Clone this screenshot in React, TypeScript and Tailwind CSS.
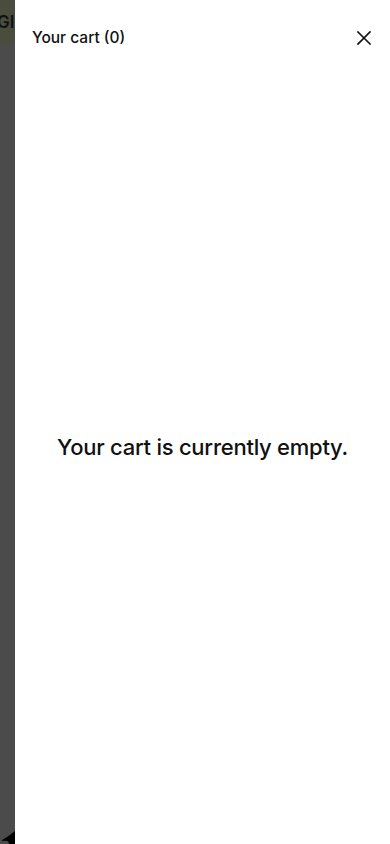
import React from 'react';

const CloseIcon: React.FC = () => (
  <svg width="16" height="16" viewBox="0 0 16 16" fill="none" stroke="#111" strokeWidth="1.6" strokeLinecap="square">
    <path d="M2 2L14 14M14 2L2 14" />
  </svg>
);

const Backdrop: React.FC = () => (
  <div className="w-[15px] shrink-0 flex flex-col bg-[#4b4b4b] overflow-hidden relative">
    <div className="h-[45px] bg-[#4a4c3e] flex items-center overflow-hidden">
      <span className="text-[17px] font-semibold text-[#111] -ml-[3px] leading-none">GI</span>
    </div>
    <div className="flex-1" />
    <svg className="absolute bottom-0 left-0" width="15" height="16" viewBox="0 0 15 16">
      <path d="M2 12 C6 10 10 7 15 3 L15 16 L9 16 C9 13 7 12 2 13 Z" fill="#000" />
    </svg>
  </div>
);

export default function App() {
  return (
    <div className="w-[390px] h-[844px] flex overflow-hidden bg-white" style={{ fontFamily: 'Inter, "Noto Sans", sans-serif' }}>
      <Backdrop />
      <div className="flex-1 flex flex-col bg-white">
        <div className="h-[75px] flex items-center justify-between pl-[17px] pr-[18px]">
          <h2 className="text-[15.5px] font-medium text-[#111] tracking-[0px]">Your cart (0)</h2>
          <button className="p-0 flex items-center justify-center"><CloseIcon /></button>
        </div>
        <div className="flex-1 flex items-center justify-center pb-[25px]">
          <p className="text-[22px] font-medium text-[#111] tracking-[-0.25px]">Your cart is currently empty.</p>
        </div>
      </div>
    </div>
  );
}
